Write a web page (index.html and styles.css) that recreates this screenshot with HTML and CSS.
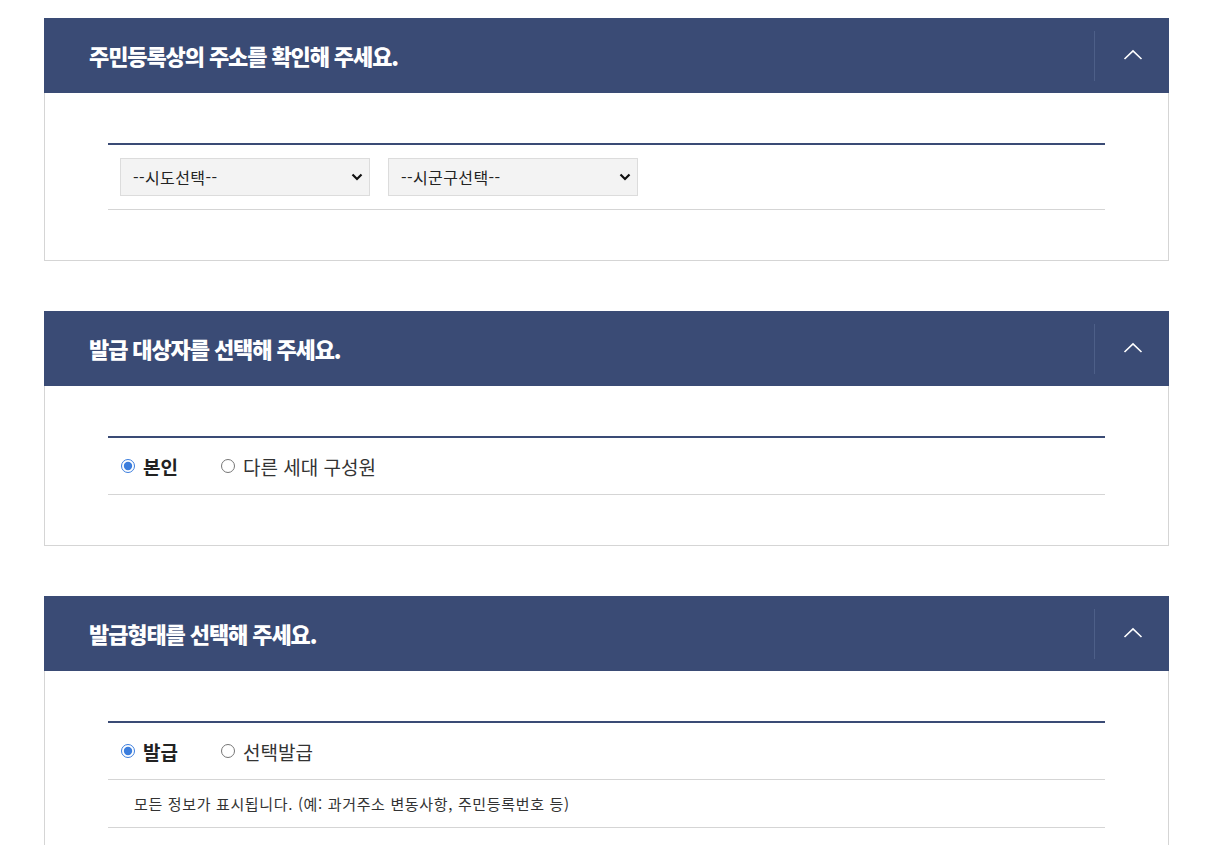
FILE: index.html
```html
<!DOCTYPE html>
<html lang="ko">
<head>
<meta charset="utf-8">
<title>주민등록</title>
<link rel="stylesheet" href="styles.css">
</head>
<body>
<div class="wrap">
  <section class="panel">
    <div class="panel-head">
      <h2 class="panel-title">주민등록상의 주소를 확인해 주세요.</h2>
      <button class="toggle" type="button" aria-label="접기">
        <svg width="20" height="11" viewBox="0 0 20 11"><path d="M1.5 10 L10 1.8 L18.5 10" fill="none" stroke="#fff" stroke-width="1.6"/></svg>
      </button>
    </div>
    <div class="panel-body">
      <div class="table">
        <div class="row row-select">
          <div class="sel">
            <select><option>--시도선택--</option></select>
            <svg class="arrow" width="12" height="8" viewBox="0 0 12 8"><path d="M1.5 1.5 L6 6 L10.5 1.5" fill="none" stroke="#111" stroke-width="2.2"/></svg>
          </div>
          <div class="sel">
            <select><option>--시군구선택--</option></select>
            <svg class="arrow" width="12" height="8" viewBox="0 0 12 8"><path d="M1.5 1.5 L6 6 L10.5 1.5" fill="none" stroke="#111" stroke-width="2.2"/></svg>
          </div>
        </div>
      </div>
    </div>
  </section>

  <section class="panel">
    <div class="panel-head">
      <h2 class="panel-title">발급 대상자를 선택해 주세요.</h2>
      <button class="toggle" type="button" aria-label="접기">
        <svg width="20" height="11" viewBox="0 0 20 11"><path d="M1.5 10 L10 1.8 L18.5 10" fill="none" stroke="#fff" stroke-width="1.6"/></svg>
      </button>
    </div>
    <div class="panel-body">
      <div class="table">
        <div class="row row-radio">
          <label class="radio on"><input type="radio" name="who" checked><span>본인</span></label>
          <label class="radio"><input type="radio" name="who"><span>다른 세대 구성원</span></label>
        </div>
      </div>
    </div>
  </section>

  <section class="panel">
    <div class="panel-head">
      <h2 class="panel-title">발급형태를 선택해 주세요.</h2>
      <button class="toggle" type="button" aria-label="접기">
        <svg width="20" height="11" viewBox="0 0 20 11"><path d="M1.5 10 L10 1.8 L18.5 10" fill="none" stroke="#fff" stroke-width="1.6"/></svg>
      </button>
    </div>
    <div class="panel-body">
      <div class="table">
        <div class="row row-radio">
          <label class="radio on"><input type="radio" name="type" checked><span>발급</span></label>
          <label class="radio"><input type="radio" name="type"><span>선택발급</span></label>
        </div>
        <div class="row row-note">모든 정보가 표시됩니다. (예: 과거주소 변동사항, 주민등록번호 등)</div>
      </div>
    </div>
  </section>
</div>
</body>
</html>
```

FILE: styles.css
```css
* { box-sizing: border-box; }
html, body { margin: 0; padding: 0; background: #fff; }
body {
  font-family: "Noto Sans CJK KR", "Noto Sans", sans-serif;
  color: #222;
}
.wrap {
  width: 1125px;
  margin: 18px 0 0 44px;
  display: flex;
  flex-direction: column;
  gap: 50px;
}
.panel-head {
  height: 75px;
  background: #3a4b75;
  display: flex;
  align-items: center;
  justify-content: space-between;
  padding-left: 45px;
}
.panel-title {
  margin: 0;
  color: #fff;
  font-size: 22px;
  font-weight: 900;
  letter-spacing: -1.1px;
  line-height: 1;
  padding-bottom: 1px;
}
.toggle {
  width: 75px;
  height: 50px;
  border: 0;
  border-left: 1px solid #4d5f88;
  background: transparent;
  display: flex;
  align-items: center;
  justify-content: center;
  padding: 0 0 2px 2px;
  cursor: pointer;
}
.panel-body {
  border: 1px solid #d5d5d5;
  border-top: 0;
  padding: 50px 63px 50px 63px;
}
.table {
  border-top: 2px solid #3a4b75;
}
.row {
  border-bottom: 1px solid #d5d5d5;
  display: flex;
  align-items: center;
}
.row-select {
  height: 65px;
  padding: 0 12px;
  gap: 18px;
}
.sel {
  position: relative;
  width: 250px;
  height: 38px;
}
.sel select {
  appearance: none;
  -webkit-appearance: none;
  width: 100%;
  height: 100%;
  background: #f3f3f3;
  border: 1px solid #dcdcdc;
  border-radius: 0;
  padding: 0 12px;
  font-family: "Noto Sans CJK KR", sans-serif;
  font-size: 16px;
  color: #222;
  letter-spacing: 0.4px;
}
.sel .arrow {
  position: absolute;
  right: 7px;
  top: 15px;
  pointer-events: none;
}
.row-radio {
  height: 57px;
  padding: 0 12px;
  gap: 42px;
}
.radio {
  display: flex;
  align-items: center;
  font-size: 19px;
  color: #333;
  letter-spacing: 0;
}
.radio input {
  margin: 0 8px 0 1px;
  width: 14px;
  height: 14px;
  accent-color: #3b7ddd;
}
.radio.on span {
  font-weight: 700;
  color: #222;
}
.row-note {
  height: 48px;
  padding: 0 26px;
  font-size: 15px;
  color: #333;
  letter-spacing: 0.65px;
}
```
